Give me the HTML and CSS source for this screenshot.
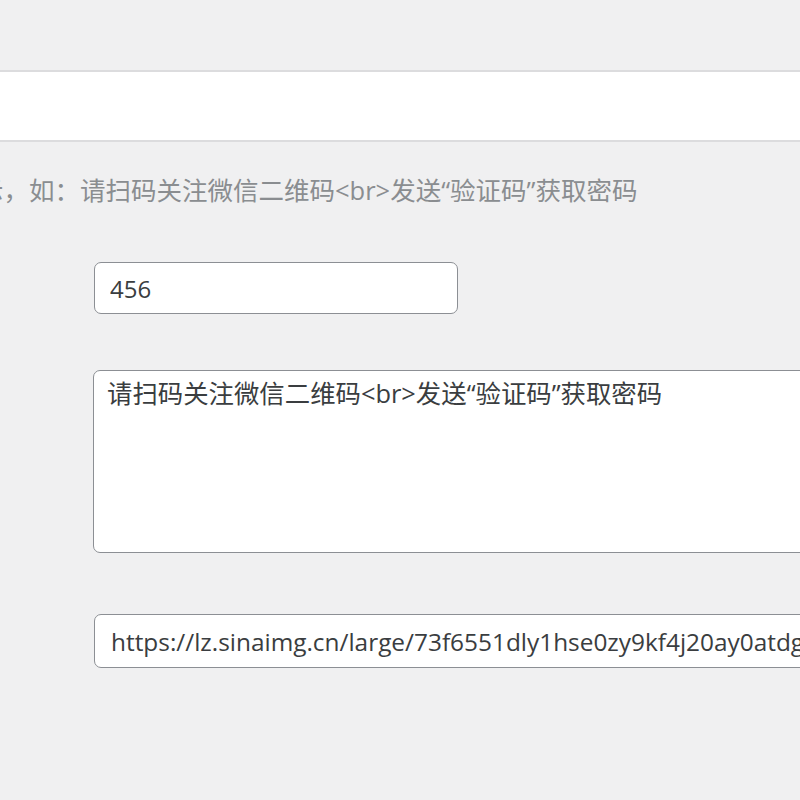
FILE: index.html
```html
<!DOCTYPE html>
<html lang="zh-CN">
<head>
	<meta charset="UTF-8">
	<meta name="viewport" content="width=device-width, initial-scale=1">
	<title>密码设置</title>
	<link rel="stylesheet" href="styles.css">
</head>
<body>

	<div class="top-band"></div>

	<p class="description">示，如：请扫码关注微信二维码&lt;br&gt;发送“验证码”获取密码</p>

	<div class="field field-code">
		<input type="text" class="regular-text" value="456">
	</div>

	<div class="field field-tip">
		<textarea class="large-text" rows="5">请扫码关注微信二维码&lt;br&gt;发送“验证码”获取密码</textarea>
	</div>

	<div class="field field-image">
		<input type="text" class="large-text url-text" value="https://lz.sinaimg.cn/large/73f6551dly1hse0zy9kf4j20ay0atdg3.jpg">
	</div>

</body>
</html>
```

FILE: styles.css
```css
:root {
	--col-bg: #f0f0f1;
	--col-line: #dcdcde;
	--col-border: #8c8f94;
	--col-text: #3a3d40;
	--col-desc: #8a8d90;
	--font-main: "Open Sans", "Noto Sans CJK SC", sans-serif;
}
body {
	margin: 0;
	padding: 0;
	overflow: hidden;
	background: var(--col-bg);
	width: 800px;
	height: 800px;
}

.top-band {
	margin-top: 70px;
	height: 68px;
	background: #fff;
	border-top: 2px solid var(--col-line);
	border-bottom: 2px solid var(--col-line);
}

/* first glyph is only partly visible, as in the cropped page */
.description {
	margin: 30px 0 0 -22px;
	font-family: var(--font-main);
	font-size: 25.5px;
	line-height: 36px;
	color: var(--col-desc);
	white-space: nowrap;
}

.field {
	padding-left: 94px;
	width: 900px;
}
.field-code {
	margin-top: 54px;
}
.field-tip {
	margin-top: 56px;
	padding-left: 93px;
}
.field-image {
	margin-top: 61px;
}

input,
textarea {
	box-sizing: border-box;
	display: block;
	margin: 0;
	background: #fff;
	border: 1.5px solid var(--col-border);
	border-radius: 7px;
	color: var(--col-text);
	font-family: var(--font-main);
	outline: none;
}

.regular-text {
	width: 364px;
	height: 52px;
	padding: 0 15px;
	font-size: 24px;
}

textarea.large-text {
	width: 760px;
	height: 183px;
	padding: 4px 13px;
	resize: none;
	font-size: 25.4px;
	line-height: 36px;
}

.url-text {
	width: 760px;
	height: 54px;
	padding: 0 16px;
	font-size: 24.4px;
}
```
